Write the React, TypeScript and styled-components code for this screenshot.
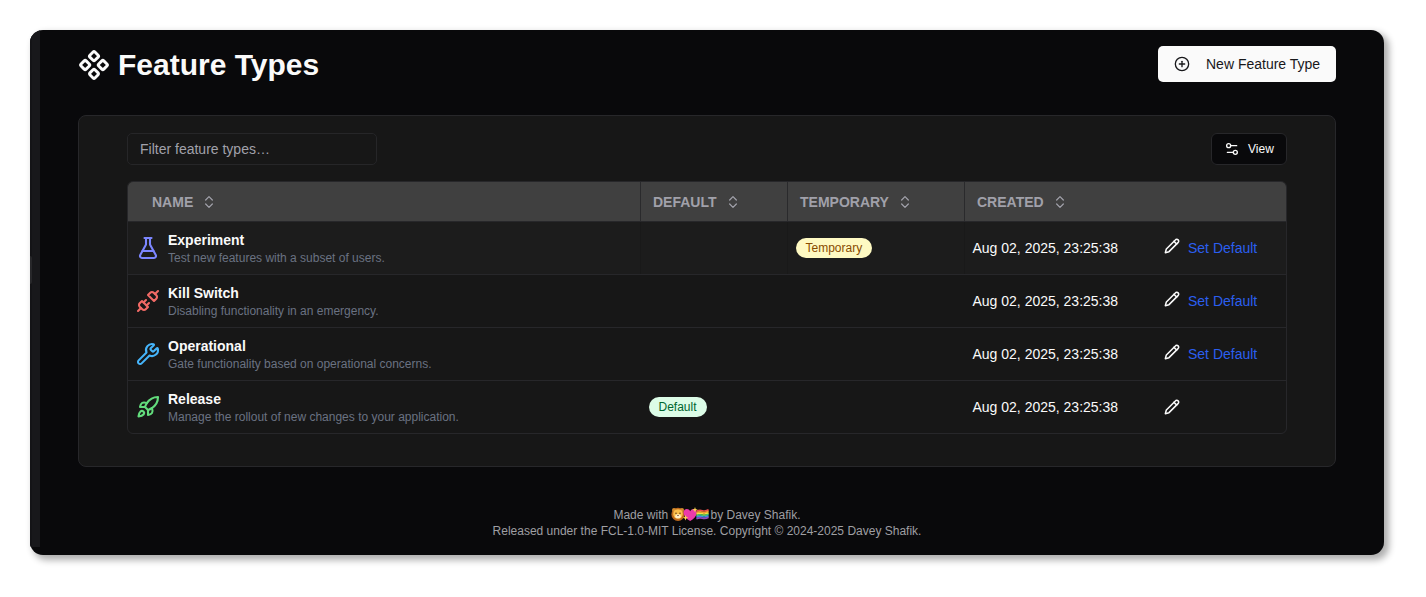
import React from 'react';
import styled, { createGlobalStyle } from 'styled-components';
import { ChevronsUpDown, CirclePlus, Component, FlaskConical, Rocket, Settings2, Unplug, Wrench } from 'lucide-react';

const GlobalStyle = createGlobalStyle`
  * { box-sizing: border-box; }
  body {
    margin: 0;
    background: #fff;
    font-family: "Liberation Sans", Arial, Helvetica, sans-serif;
    font-size: 14px;
    line-height: 20px;
  }
  svg { display: block; flex-shrink: 0; }
`;

const Page = styled.div`
  width: 1426px;
  height: 597px;
  padding: 30px;
`;

const Window = styled.div`
  display: flex;
  width: 1354px;
  height: 525px;
  border-radius: 13px;
  overflow: hidden;
  background: #09090b;
  color: #fafafa;
  box-shadow: 4px 4px 7px 1px rgba(0, 0, 0, 0.32);
`;

const SidebarEdge = styled.div`
  width: 10px;
  height: 517px;
  flex-shrink: 0;
  background: #18181b;
  border-left: 2px solid #141417;
  padding-top: 226px;
`;

const DragHandle = styled.div`
  width: 2px;
  height: 28px;
  margin-left: -2px;
  background: #27272a;
  border-radius: 0 2px 2px 0;
`;

const Main = styled.main`
  flex: 1;
  display: flex;
  flex-direction: column;
  padding: 16px 48px 0 38px;
`;

const Header = styled.header`
  display: flex;
  justify-content: space-between;
  align-items: flex-start;
`;

const Title = styled.h1`
  display: flex;
  align-items: center;
  gap: 8.5px;
  height: 38px;
  margin: 0 0 0 -0.5px;
  font-size: 30px;
  line-height: 36px;
  font-weight: 700;
`;

const PrimaryButton = styled.button`
  display: flex;
  align-items: center;
  gap: 16px;
  width: 178px;
  height: 36px;
  padding: 0 16px;
  border: 0;
  border-radius: 5px;
  background: #fafafa;
  color: #18181b;
  font: 14px/20px "Liberation Sans", Arial, sans-serif;
  white-space: nowrap;
`;

const Card = styled.section`
  height: 352px;
  margin-top: 31px;
  padding: 17px 48px 0;
  background: #171717;
  border: 1px solid #27272a;
  border-radius: 8px;
`;

const Toolbar = styled.div`
  display: flex;
  justify-content: space-between;
  height: 32px;
  margin-bottom: 16px;
`;

const FilterInput = styled.input`
  width: 250px;
  height: 32px;
  padding: 0 12px;
  border: 1px solid #262628;
  border-radius: 5px;
  background: transparent;
  font: 14px/20px "Liberation Sans", Arial, sans-serif;
  &::placeholder { color: #a1a1aa; opacity: 1; }
`;

const ViewButton = styled.button`
  display: flex;
  align-items: center;
  gap: 8px;
  width: 76px;
  height: 32px;
  padding: 0 12px;
  border: 1px solid #27272a;
  border-radius: 6px;
  background: #09090b;
  color: #fafafa;
  font: 12px/16px "Liberation Sans", Arial, sans-serif;
`;

const Table = styled.div`
  height: 253px;
  border: 1px solid #27272a;
  border-radius: 6px;
  overflow: hidden;
`;

const Row = styled.div<{ $head?: boolean; $active?: boolean }>`
  display: grid;
  grid-template-columns: 513px 147px 177px 1fr;
  height: ${p => (p.$head ? 40 : 53)}px;
  background: ${p => (p.$head ? '#404040' : p.$active ? '#1c1c1c' : 'transparent')};
  border-bottom: 1px solid #27272a;
  &:last-child { border-bottom: 0; height: 52px; }
`;

const HeadCell = styled.div<{ $first?: boolean }>`
  display: flex;
  align-items: center;
  gap: 8px;
  padding-left: ${p => (p.$first ? 24 : 12)}px;
  border-right: 1px solid #2a2a2c;
  color: #a1a1aa;
  font-weight: 700;
  &:last-child { border-right: 0; }
`;

const Cell = styled.div<{ $divided?: boolean }>`
  display: flex;
  align-items: center;
  padding-left: 7.5px;
  border-right: 1px solid ${p => (p.$divided ? '#191919' : 'transparent')};
  &:last-child { border-right: 0; }
`;

const NameText = styled.div`
  margin-left: 8.5px;
`;

const Name = styled.div`
  height: 18px;
  line-height: 18px;
  font-weight: 700;
`;

const Description = styled.div`
  height: 17px;
  line-height: 19px;
  font-size: 12px;
  color: #6a7282;
`;

const Badge = styled.span<{ $tone: 'yellow' | 'green' }>`
  height: 20px;
  padding: 0 10px;
  border-radius: 10px;
  font-size: 12px;
  line-height: 20px;
  background: ${p => (p.$tone === 'yellow' ? '#fef9c2' : '#dcfce7')};
  color: ${p => (p.$tone === 'yellow' ? '#894b00' : '#016630')};
`;

const CreatedDate = styled.time`
  width: 191.5px;
`;

const EditButton = styled.button<{ $raised?: boolean }>`
  padding: 0 0 ${p => (p.$raised ? 4 : 0)}px;
  border: 0;
  background: none;
  color: #fafafa;
`;

const SetDefault = styled.a`
  margin-left: 8px;
  color: #2b5ff0;
`;

const Footer = styled.footer`
  margin-top: 40px;
  text-align: center;
  font-size: 12px;
  line-height: 16px;
  color: #9f9fa3;
`;

const FooterLine = styled.div`
  display: flex;
  justify-content: center;
  height: 16px;
  white-space: pre;
`;

const PencilIcon = () => (
  <svg width="16" height="16" viewBox="0 0 24 24" fill="none" stroke="currentColor" strokeWidth="2.3" strokeLinecap="round" strokeLinejoin="round">
    <path d="M17 3a2.85 2.83 0 1 1 4 4L7.5 20.5 2 22l1.5-5.5Z" />
    <path d="m15 5 4 4" />
  </svg>
);

const Emojis = () => (
  <svg width="39" height="16" viewBox="0 0 39 16">
    <circle cx="7" cy="7.4" r="6.6" fill="#bd691c" />
    <circle cx="3" cy="3" r="2" fill="#d58b2e" />
    <circle cx="11" cy="3" r="2" fill="#d58b2e" />
    <circle cx="7" cy="7" r="4.8" fill="#fbc04b" />
    <ellipse cx="7" cy="9.2" rx="2.8" ry="2" fill="#fff0c9" />
    <circle cx="5" cy="6.3" r="0.7" fill="#49290f" />
    <circle cx="9" cy="6.3" r="0.7" fill="#49290f" />
    <path d="M6 8h2L7 9.2z" fill="#55301c" />
    <path d="M19.2 14C16 12 12.6 9 12.6 5.4c0-3.9 5-4.6 6.6-1.2 1.6-3.4 6.6-2.7 6.6 1.2 0 3.600-3.400 6.600-6.600 8.600z" fill="#ec3aaa" />
    <path d="M24 0l.7 2.100 2 .7-2 .7-.7 2-.7-2-2-.7 2-.7zM14.500 8l.8 2 2 .8-2 .8-.8 2-.8-2-2-.8 2-.8z" fill="#ffd44f" />
    <g fill="none" strokeWidth="1.7">
      <path d="M25.400 4.200q3-1.400 6-.5t6.200-.9" stroke="#ec4c4a" />
      <path d="M25.400 5.700q3-1.400 6-.5t6.200-.9" stroke="#f59b32" />
      <path d="M25.400 7.200q3-1.400 6-.5t6.200-.9" stroke="#f7df45" />
      <path d="M25.400 8.700q3-1.400 6-.5t6.200-.9" stroke="#4cc766" />
      <path d="M25.400 10.200q3-1.400 6-.5t6.200-.9" stroke="#3f8de5" />
      <path d="M25.400 11.700q3-1.400 6-.5t6.200-.9" stroke="#9549bd" />
    </g>
  </svg>
);

const featureTypes = [
  { name: 'Experiment', description: 'Test new features with a subset of users.', Icon: FlaskConical, color: '#7c86ff', temporary: true },
  { name: 'Kill Switch', description: 'Disabling functionality in an emergency.', Icon: Unplug, color: '#f26a66' },
  { name: 'Operational', description: 'Gate functionality based on operational concerns.', Icon: Wrench, color: '#45b4fa' },
  { name: 'Release', description: 'Manage the rollout of new changes to your application.', Icon: Rocket, color: '#62dc7c', isDefault: true },
];

export default function App() {
  return (
    <Page>
      <GlobalStyle />
      <Window>
        <SidebarEdge><DragHandle /></SidebarEdge>
        <Main>
          <Header>
            <Title><Component size={32} strokeWidth={2.2} />Feature Types</Title>
            <PrimaryButton><CirclePlus size={16} />New Feature Type</PrimaryButton>
          </Header>
          <Card>
            <Toolbar>
              <FilterInput placeholder="Filter feature types…" />
              <ViewButton><Settings2 size={16} />View</ViewButton>
            </Toolbar>
            <Table>
              <Row $head>
                {['NAME', 'DEFAULT', 'TEMPORARY', 'CREATED'].map((label, i) => (
                  <HeadCell key={label} $first={i === 0}>{label}<ChevronsUpDown size={16} strokeWidth={1.9} /></HeadCell>
                ))}
              </Row>
              {featureTypes.map(({ name, description, Icon, color, temporary, isDefault }, i) => (
                <Row key={name} $active={i === 0}>
                  <Cell $divided={i === 0}>
                    <Icon size={24} color={color} strokeWidth={2.1} />
                    <NameText><Name>{name}</Name><Description>{description}</Description></NameText>
                  </Cell>
                  <Cell $divided={i === 0}>{isDefault && <Badge $tone="green">Default</Badge>}</Cell>
                  <Cell $divided={i === 0}>{temporary && <Badge $tone="yellow">Temporary</Badge>}</Cell>
                  <Cell>
                    <CreatedDate>Aug 02, 2025, 23:25:38</CreatedDate>
                    <EditButton $raised={!isDefault}><PencilIcon /></EditButton>
                    {!isDefault && <SetDefault>Set Default</SetDefault>}
                  </Cell>
                </Row>
              ))}
            </Table>
          </Card>
          <Footer>
            <FooterLine>{'Made with '}<Emojis />by Davey Shafik.</FooterLine>
            <FooterLine>Released under the FCL-1.0-MIT License. Copyright © 2024-2025 Davey Shafik.</FooterLine>
          </Footer>
        </Main>
      </Window>
    </Page>
  );
}
